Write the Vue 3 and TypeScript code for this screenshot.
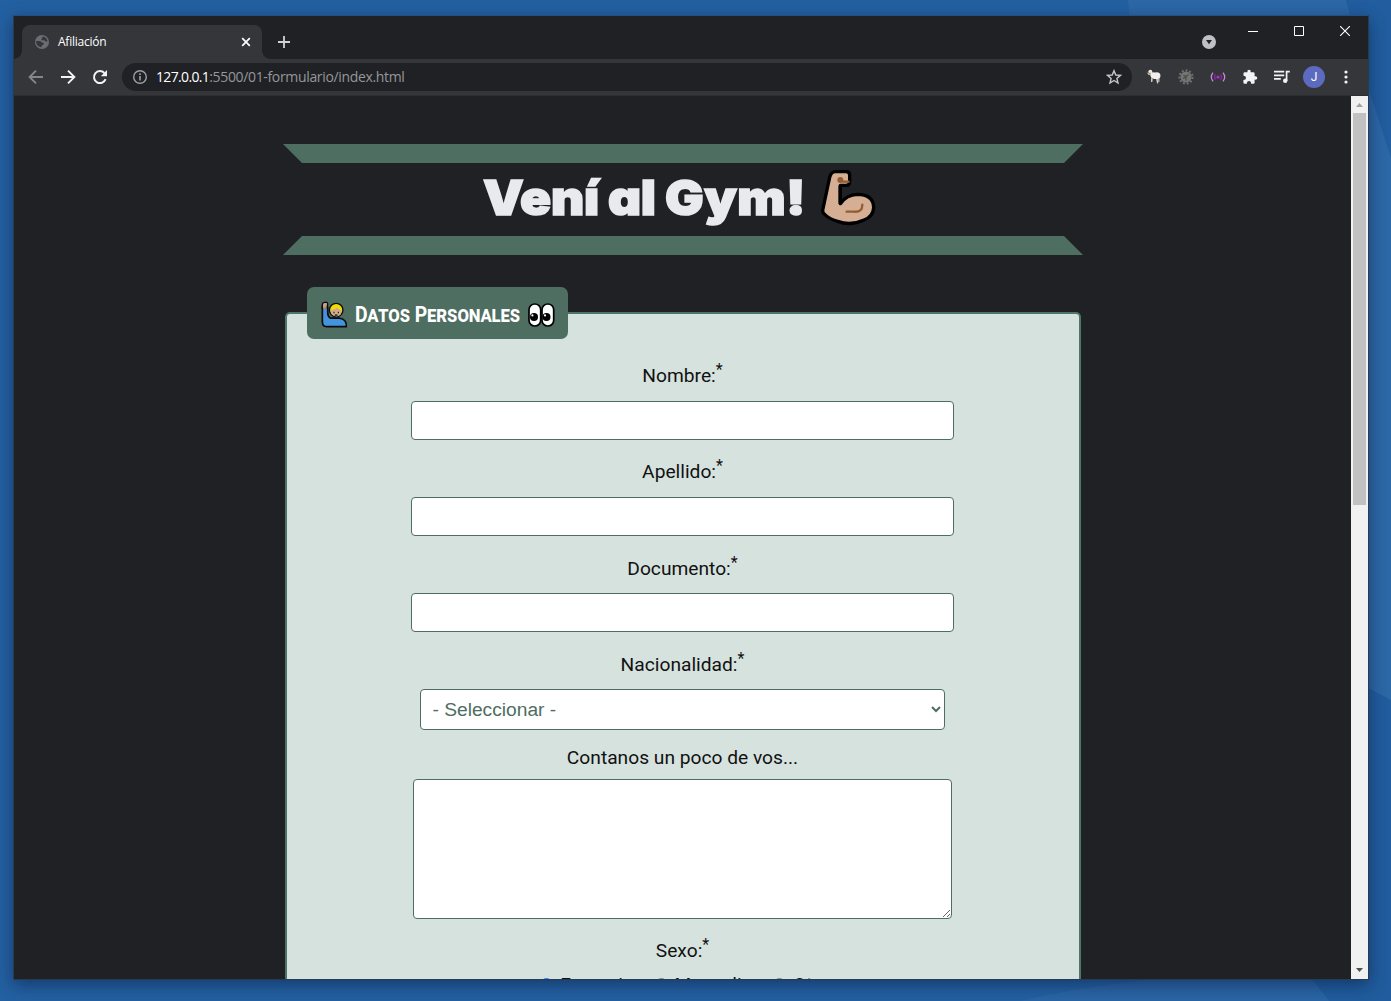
<script setup lang="ts">
import { ref } from 'vue'

interface Field {
  id: string
  label: string
}

const fields: Field[] = [
  { id: 'nombre', label: 'Nombre:' },
  { id: 'apellido', label: 'Apellido:' },
  { id: 'documento', label: 'Documento:' },
]
const genders: string[] = ['Femenino', 'Masculino', 'Otro']
const gender = ref<string>('Femenino')
</script>

<template>
  <div class="desktop">
    <svg class="wallpaper" viewBox="0 0 1391 1001" width="1391" height="1001">
      <path d="M1128 0H1346L1391 140V1001H1325C1250 700 1160 300 1128 0Z" fill="#2c67a7" />
      <path d="M1346 0H1391V240L1368 80Z" fill="#215d9f" />
      <path d="M1369 90L1391 158V700L1369 690Z" fill="#2c67a6" />
      <path d="M1368 688L1391 700V1001H1329L1312 979Z" fill="#205c9e" />
      <path d="M1020 1001Q1180 965 1312 979L1329 1001Z" fill="#2a65a5" />
    </svg>

    <div class="window">
      <header class="tabstrip">
        <div class="tab">
          <svg class="globe" width="14" height="14" viewBox="0 0 14 14">
            <circle cx="7" cy="7" r="7" fill="#6a6d71" />
            <path d="M1.2 6H4.6Q6.6 6.2 6.6 7.6Q8.6 7.4 9 8.8Q8.6 10 6.8 10.2L6.6 12.2Q2.4 12 1.2 8ZM7.4 1.6Q8 3 6.4 4L6.6 5.2H9.4L10.4 6.6L12.6 6.4Q12 3 9.2 1.8Z" fill="#35363a" />
          </svg>
          <span class="tab-title">Afiliación</span>
          <svg class="tab-close" width="10" height="10" viewBox="0 0 10 10">
            <path d="M1.2 1.2L8.8 8.8M8.8 1.2L1.2 8.8" stroke="#fff" stroke-width="1.7" />
          </svg>
        </div>
        <svg class="new-tab" width="12" height="12" viewBox="0 0 12 12">
          <path d="M6 0V12M0 6H12" stroke="#cfd1d5" stroke-width="1.8" />
        </svg>
        <div class="spacer"></div>
        <svg class="tab-search" width="14" height="14" viewBox="0 0 14 14">
          <circle cx="7" cy="7" r="7" fill="#bdc1c6" />
          <path d="M4 5H10L7 9.3Z" fill="#202124" />
        </svg>
        <div class="controls">
          <svg width="10" height="10" viewBox="0 0 10 10"><path d="M0 5.5H10" stroke="#fff" /></svg>
          <svg width="10" height="10" viewBox="0 0 10 10"><path d="M.5 .5H9.5V9.5H.5Z" stroke="#fff" fill="none" /></svg>
          <svg width="10" height="10" viewBox="0 0 10 10"><path d="M0 0L10 10M10 0L0 10" stroke="#fff" stroke-width="1.1" /></svg>
        </div>
      </header>

      <nav class="toolbar">
        <svg width="16" height="16" viewBox="0 0 16 16" fill="none" stroke="#85868a" stroke-width="1.9"><path d="M15 8H2M8 1.6L1.6 8L8 14.4" /></svg>
        <svg width="16" height="16" viewBox="0 0 16 16" fill="none" stroke="#f1f3f4" stroke-width="1.9"><path d="M1 8H14M8 1.6L14.4 8L8 14.4" /></svg>
        <svg width="16" height="16" viewBox="0 0 16 16"><path d="M13.6 10.2A6 6 0 1 1 12.4 4" fill="none" stroke="#f1f3f4" stroke-width="2" /><path d="M15 1V7.2H8.8Z" fill="#f1f3f4" /></svg>
        <div class="omnibox">
          <svg width="14" height="14" viewBox="0 0 14 14">
            <circle cx="7" cy="7" r="6.3" fill="none" stroke="#9aa0a6" stroke-width="1.4" />
            <path d="M7 6V10.5M7 3.3V4.9" stroke="#9aa0a6" stroke-width="1.6" />
          </svg>
          <span class="url"><b>127.0.0.1</b><i>:5500/01-formulario/index.html</i></span>
          <svg width="16" height="16" viewBox="0 0 16 16">
            <path d="M8 1.7L9.8 6L14.4 6.4L10.9 9.4L12 14L8 11.5L4 14L5.1 9.4L1.6 6.4L6.2 6Z" fill="none" stroke="#c4c7cb" stroke-width="1.4" />
          </svg>
        </div>
        <div class="extensions">
          <svg width="16" height="16" viewBox="0 0 16 16">
            <path d="M5 8L5.6 12.5H6.8V9.5H10L11 14H12.2L12.6 8Z" fill="#a99c88" />
            <path d="M5.6 9.5V13M11 10L11.6 14.5M12.9 9V13" stroke="#ddd8ce" stroke-width="1" />
            <path d="M4.5 3.8Q6.8 2.8 9 3.6Q13 2.6 14.3 5.2Q15 8 13.2 9.4Q9.8 10.6 7 9.4Q4.4 8.6 4.2 6Z" fill="#f1efeb" />
            <circle cx="4.3" cy="2.8" r="2" fill="#eeeae3" />
            <path d="M1.2 4L5.2 3.6L4.6 6.2L2.4 6Z" fill="#c5b6a1" />
            <path d="M.6 3.1L2.2 3.5M2.9 4.6H3.6" stroke="#6d6255" stroke-width=".8" />
          </svg>
          <svg width="16" height="16" viewBox="0 0 16 16">
            <circle cx="8" cy="8" r="6.6" fill="none" stroke="#6f6f6e" stroke-width="2" stroke-dasharray="2 1.8" />
            <circle cx="8" cy="8" r="5.6" fill="#747473" />
            <path d="M5.4 6.2L8 7.4L10.7 5.7M5.2 9.5L8 7.4V11.4" fill="none" stroke="#4c4c4d" stroke-width="1.2" />
          </svg>
          <svg width="16" height="16" viewBox="0 0 16 16" fill="none">
            <circle cx="8" cy="8" r="1.6" fill="#b02ccc" />
            <path d="M5.3 5.2Q3.8 8 5.3 10.8M10.7 5.2Q12.2 8 10.7 10.8" stroke="#9a1fb6" stroke-width="1.3" />
            <path d="M3 3.6Q-.4 8 3 12.4M13 3.6Q16.4 8 13 12.4" stroke="#c58bd4" stroke-width="1.3" />
          </svg>
          <svg width="16" height="16" viewBox="0 0 16 16">
            <path d="M1.5 4.5Q1.5 3.2 2.8 3.2H5.4Q5 .8 7 .8Q9 .8 8.7 3.2H11.4Q12.6 3.2 12.6 4.4V7.2Q15.3 6.8 15.3 9Q15.3 11 12.6 10.6V13.4Q12.6 14.7 11.4 14.7H9.1Q9.2 11.9 7 11.9Q4.8 11.9 4.9 14.7H2.7Q1.4 14.7 1.4 13.4V11Q4 10.9 4 8.9Q4 6.9 1.5 6.8Z" fill="#f1f3f4" />
          </svg>
          <svg width="16" height="16" viewBox="0 0 16 16">
            <path d="M0 2.7H10.2M0 6.3H10.2M0 9.9H6.8M12.6 12V2.6H15.8" stroke="#f1f3f4" stroke-width="1.7" fill="none" />
            <circle cx="11.2" cy="11.7" r="2.2" fill="#f1f3f4" />
          </svg>
          <span class="avatar">J</span>
          <svg class="kebab" width="4" height="14" viewBox="0 0 4 14" fill="#f1f3f4">
            <circle cx="2" cy="2" r="1.6" /><circle cx="2" cy="7" r="1.6" /><circle cx="2" cy="12" r="1.6" />
          </svg>
        </div>
      </nav>

      <div class="viewport">
        <main class="page">
          <div class="banner">
            <div class="bar bar-top"></div>
            <h1>
              <span class="w1">Vení</span><span class="w2">al</span><span class="w3">Gym!</span>
              <svg class="bicep" width="57" height="57" viewBox="62 27 171 171">
                <path d="M108 35H140Q151 35 151 46V65Q151 76 140 76H123V131Q142 104 174 103Q222 103 223 143Q221 171 194 180Q153 199 115 184Q88 177 72 159Q69 154 71 146L91 52Q96 35 108 35Z" fill="#d5ae93" stroke="#000" stroke-width="10" stroke-linejoin="round" />
                <path d="M122 77V131" stroke="#000" stroke-width="9" />
                <path d="M124 60L131 65H148M142 155H164Q189 158 189 134" fill="none" stroke="#935d32" stroke-width="7" stroke-linecap="round" />
                <circle cx="123" cy="60" r="9" fill="#935d32" />
              </svg>
            </h1>
            <div class="bar bar-bottom"></div>
          </div>

          <form class="card" @submit.prevent>
            <div class="legend">
              <svg width="27" height="27" viewBox="33 32 80 80">
                <path d="M37 48V95Q38 108 50 108H108Q110 86 88 83H62Q54 80 53 69V50Z" fill="#4394dd" stroke="#0b0c0d" stroke-width="5" stroke-linejoin="round" />
                <path d="M37 54V41Q38 36 44 36Q53 34 53 42L50 54Z" fill="#c99e82" stroke="#0b0c0d" stroke-width="4" />
                <path d="M39 53H50" stroke="#c99e82" stroke-width="4" />
                <circle cx="78" cy="59" r="20" fill="#f4dc00" stroke="#0b0c0d" stroke-width="4" />
                <path d="M61 59Q74 58 80 51Q88 60 94 58Q94 77 78 78Q62 76 61 59Z" fill="#d2ab8e" />
                <path d="M70 66H73M83 66H86M74 73Q78 75 82 73" stroke="#0b0c0d" stroke-width="4" fill="none" />
              </svg>
              <span class="legend-text">Datos Personales</span>
              <svg class="eyes" width="27" height="24" viewBox="0 0 27 24">
                <g fill="#fff" stroke="#000" stroke-width="1.7">
                  <rect x="1" y="1" width="11.7" height="22" rx="5.8" />
                  <rect x="14" y="1" width="11.7" height="22" rx="5.8" />
                </g>
                <circle cx="6" cy="14" r="4" /><circle cx="18.5" cy="14" r="4" />
                <circle cx="4.4" cy="12.4" r="1.1" fill="#fff" /><circle cx="17" cy="12.4" r="1.1" fill="#fff" />
              </svg>
            </div>

            <div v-for="f in fields" :key="f.id" class="field">
              <label :for="f.id" :class="{ low: f.id === 'documento' }">{{ f.label }}<sup>*</sup></label>
              <input :id="f.id" type="text" />
            </div>
            <div class="field">
              <label for="nacionalidad" class="low">Nacionalidad:<sup>*</sup></label>
              <select id="nacionalidad"><option>- Seleccionar -</option></select>
            </div>
            <div class="field">
              <label for="bio" class="short">Contanos un poco de vos...</label>
              <textarea id="bio"></textarea>
            </div>
            <div class="field">
              <label class="sex">Sexo:<sup>*</sup></label>
              <div class="radios">
                <label v-for="g in genders" :key="g" class="radio">
                  <input v-model="gender" type="radio" name="sexo" :value="g" /><span>{{ g }}</span>
                </label>
              </div>
            </div>
          </form>
        </main>

        <div class="scrollbar">
          <svg width="17" height="17" viewBox="0 0 17 17"><path d="M5 11L8.5 7L12 11Z" fill="#a3a3a3" /></svg>
          <div class="thumb"></div>
          <div class="spacer"></div>
          <svg width="17" height="17" viewBox="0 0 17 17"><path d="M5 6H12L8.5 10Z" fill="#505050" /></svg>
        </div>
      </div>
    </div>
  </div>
</template>

<style>
body {
  overflow: hidden;
}
</style>

<style scoped>
* {
  box-sizing: border-box;
}
svg {
  display: block;
  flex: none;
}
.desktop {
  position: relative;
  width: 1391px;
  height: 1001px;
  padding: 15px 22px 21px 13px;
  background: #2360a2;
  overflow: hidden;
}
.wallpaper {
  position: absolute;
  left: 0;
  top: 0;
}
.window {
  position: relative;
  display: flex;
  flex-direction: column;
  width: 1356px;
  height: 965px;
  border: 1px solid #283b50;
  border-top-color: #23517f;
  background: #202124;
  box-shadow: 0 5px 16px rgba(0, 10, 30, 0.42);
}
.spacer {
  flex: 1;
}
.tabstrip {
  display: flex;
  height: 43px;
  flex: none;
}
.tab {
  position: relative;
  display: flex;
  align-items: center;
  width: 240px;
  margin: 9px 0 0 8px;
  padding: 0 11px 0 13px;
  border-radius: 8px 8px 0 0;
  background: #35363a;
}
.tab::before,
.tab::after {
  content: '';
  position: absolute;
  bottom: 0;
  width: 8px;
  height: 8px;
}
.tab::before {
  left: -8px;
  background: radial-gradient(circle at 0 0, transparent 7.5px, #35363a 8px);
}
.tab::after {
  right: -8px;
  background: radial-gradient(circle at 100% 0, transparent 7.5px, #35363a 8px);
}
.tab-title {
  flex: 1;
  margin-left: 9px;
  padding-bottom: 1px;
  color: #fff;
  font: 12px 'Open Sans', sans-serif;
  letter-spacing: -0.25px;
}
.new-tab {
  margin: 20px 0 0 16px;
}
.tab-search {
  margin: 19px 32px 0 0;
}
.controls {
  display: flex;
  gap: 36px;
  margin: 10px 18px 0 0;
}
.toolbar {
  display: flex;
  align-items: center;
  gap: 16px;
  height: 37px;
  flex: none;
  padding-left: 14px;
  background: #35363a;
  border-bottom: 1px solid #2d2e31;
}
.omnibox {
  display: flex;
  align-items: center;
  width: 1010px;
  height: 28px;
  margin-left: -2px;
  padding: 0 10px 0 11px;
  border-radius: 14px;
  background: #202124;
}
.url {
  flex: 1;
  margin-left: 9px;
  font: 14px/20px 'Open Sans', sans-serif;
  color: #94979b;
  white-space: nowrap;
}
.url b {
  font-weight: 400;
  color: #fff;
  letter-spacing: -0.65px;
}
.url i {
  font-style: normal;
  letter-spacing: -0.34px;
}
.extensions {
  display: flex;
  align-items: center;
  gap: 16px;
  margin-left: -2px;
}
.avatar {
  width: 22px;
  height: 22px;
  margin-left: -3px;
  border-radius: 50%;
  background: #5c6bc0;
  color: #fff;
  font: 12px/22px Roboto, sans-serif;
  text-align: center;
}
.kebab {
  margin-left: 3px;
}
.viewport {
  display: flex;
  height: 883px;
}
.page {
  display: flex;
  flex-direction: column;
  align-items: center;
  width: 1337px;
  height: 883px;
  padding-top: 48px;
  overflow: hidden;
  background: #202124;
  font: 19.2px Roboto, sans-serif;
  color: #111;
}
.banner {
  flex: none;
  width: 800px;
  margin-left: 1px;
}
.bar {
  height: 19px;
  background: #4e6e62;
}
.bar-top {
  clip-path: polygon(0 0, 100% 0, 781px 100%, 19px 100%);
}
.bar-bottom {
  clip-path: polygon(19px 0, 781px 0, 100% 100%, 0 100%);
}
h1 {
  display: flex;
  height: 73px;
  margin: 0;
  padding-left: 200px;
  color: #e8eaed;
  font: 900 47.5px/70px Inter, sans-serif;
  font-feature-settings: 'cv11';
}
h1 span {
  white-space: nowrap;
  transform: scaleX(1.08);
  transform-origin: 0 50%;
  -webkit-text-stroke: 1.6px #e8eaed;
}
.w1 {
  width: 125px;
  letter-spacing: -0.2px;
}
.w2 {
  width: 57px;
  letter-spacing: -0.3px;
}
.w3 {
  width: 155px;
  letter-spacing: 0.4px;
}
.bicep {
  margin-top: 6px;
}
.card {
  position: relative;
  display: flex;
  flex-direction: column;
  flex: none;
  width: 796px;
  height: 900px;
  margin-top: 57px;
  padding-top: 30px;
  border: 2px solid #4e7568;
  border-radius: 5px;
  background: #d6e2de;
}
.legend {
  position: absolute;
  left: 20px;
  top: -27px;
  display: flex;
  align-items: center;
  width: 261px;
  height: 52px;
  padding: 2px 13px 0 13px;
  border-radius: 7px;
  background: #4e6e62;
}
.legend svg:first-child {
  margin: 0 0 0 1px;
}
.legend-text {
  flex: 1;
  min-width: 0;
  margin-left: 7px;
  color: #fff;
  font-size: 22px;
  font-weight: 700;
  font-variant: small-caps;
  letter-spacing: -0.1px;
  white-space: nowrap;
  transform: scaleX(0.88);
  transform-origin: 0 50%;
}
.eyes {
  margin-top: 2px;
}
.field {
  display: flex;
  flex-direction: column;
  align-items: center;
}
.field > label {
  height: 57px;
  padding-top: 7px;
  line-height: 50px;
  white-space: nowrap;
}
.field > .low {
  padding-top: 8px;
}
.field > .short {
  height: 49px;
  padding-top: 6px;
  line-height: 43px;
}
.field > .sex {
  height: 54px;
}
sup {
  font-size: 16px;
  line-height: 0;
  vertical-align: 7px;
}
.field > input,
select,
textarea {
  margin: 0;
  border: 1px solid #4e6e62;
  border-radius: 4px;
  background: #fff;
  outline: none;
}
.field > input {
  width: 543px;
  height: 39px;
}
select {
  width: 525px;
  height: 41px;
  padding: 0 1px 0 7.5px;
  color: #4e6e62;
  font: 19.2px 'Liberation Sans', sans-serif;
}
textarea {
  width: 539px;
  height: 140px;
}
.radios {
  display: flex;
  gap: 10px;
  height: 24px;
  margin-left: 5px;
  line-height: 24px;
}
.radio {
  display: flex;
  white-space: nowrap;
}
.radio input {
  width: 13px;
  height: 13px;
  margin: 5px 7px 0 0;
}
.scrollbar {
  display: flex;
  flex-direction: column;
  align-items: center;
  width: 17px;
  height: 883px;
  background: #f1f1f1;
}
.thumb {
  width: 13px;
  height: 392px;
  background: #c1c1c1;
}
</style>
